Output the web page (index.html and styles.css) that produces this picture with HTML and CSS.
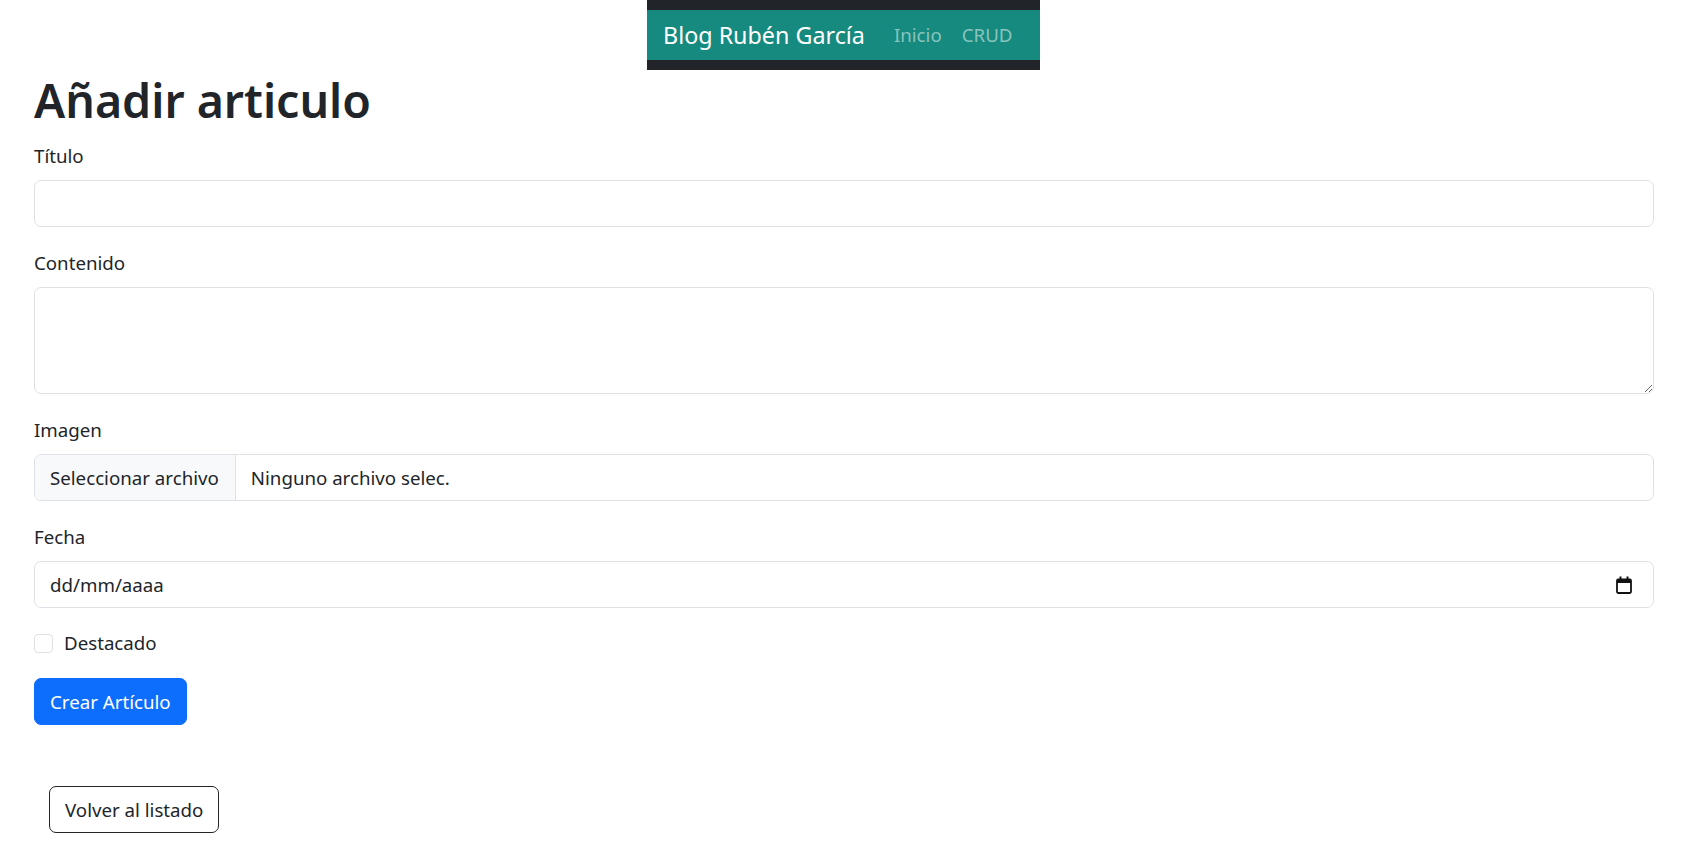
FILE: index.html
```html
<!DOCTYPE html>
<html lang="es">
<head>
<meta charset="utf-8">
<title>Añadir articulo</title>
<link rel="stylesheet" href="styles.css">
</head>
<body>
<header class="topbar">
  <nav class="navbar">
    <a class="brand" href="#">Blog Rubén García</a>
    <a class="nav-link" href="#">Inicio</a>
    <a class="nav-link" href="#">CRUD</a>
  </nav>
</header>
<main class="container">
  <h1 class="title">Añadir articulo</h1>
  <form class="form">
    <div class="field">
      <label class="label" for="titulo">Título</label>
      <input class="control" id="titulo" type="text">
    </div>
    <div class="field">
      <label class="label" for="contenido">Contenido</label>
      <textarea class="control area" id="contenido"></textarea>
    </div>
    <div class="field">
      <label class="label">Imagen</label>
      <div class="control file">
        <span class="file-btn">Seleccionar archivo</span>
        <span class="file-name">Ninguno archivo selec.</span>
      </div>
    </div>
    <div class="field">
      <label class="label">Fecha</label>
      <div class="control date">
        <span>dd/mm/aaaa</span>
        <svg class="cal" width="16" height="18" viewBox="0 0 16 18" aria-hidden="true">
          <rect x="1" y="3.5" width="14" height="13.5" rx="1.2" fill="none" stroke="#111" stroke-width="1.8"/>
          <rect x="1" y="3" width="14" height="4" fill="#111"/>
          <rect x="3.5" y="0.5" width="2" height="3.5" fill="#111"/>
          <rect x="10.5" y="0.5" width="2" height="3.5" fill="#111"/>
        </svg>
      </div>
    </div>
    <div class="check">
      <span class="box"></span>
      <span class="check-label">Destacado</span>
    </div>
    <button class="btn primary" type="button">Crear Artículo</button>
  </form>
  <div class="back">
    <a class="btn outline" href="#">Volver al listado</a>
  </div>
</main>
</body>
</html>
```
FILE: styles.css
```css
* { box-sizing: border-box; }
html, body { margin: 0; padding: 0; }
body {
  font-family: "Noto Sans", "Open Sans", sans-serif;
  font-size: 18.7px;
  line-height: 1.5;
  color: #212529;
  background: #fff;
}
.topbar {
  display: flex;
  justify-content: center;
  padding-right: 11px;
}
.navbar {
  width: 393px;
  height: 70px;
  background: #168a7f;
  border-top: 10px solid #212529;
  border-bottom: 10px solid #212529;
  display: flex;
  align-items: center;
  padding: 1px 16px 0;
  white-space: nowrap;
}
.brand {
  color: #fff;
  text-decoration: none;
  font-size: 23.3px;
  margin-right: 29px;
}
.nav-link {
  color: #8ac4be;
  text-decoration: none;
  font-size: 18.7px;
  margin-right: 20px;
}
.container {
  padding: 0 44px 0 34px;
}
.title {
  margin: 0 0 10px;
  font-size: 46.5px;
  font-weight: 600;
  line-height: 60px;
}
.field { margin-bottom: 20px; }
.label {
  display: block;
  margin-bottom: 10px;
  line-height: 30px;
  padding-top: 1px;
  height: 30px;
}
.control {
  display: block;
  width: 100%;
  height: 47px;
  border: 1px solid #dee2e6;
  border-radius: 7px;
  padding: 0 15px;
  font: inherit;
  color: #212529;
  background: #fff;
  outline: none;
}
.area {
  height: 107px;
  resize: vertical;
  padding: 7px 15px;
}
.file {
  display: flex;
  align-items: stretch;
  padding: 0;
  overflow: hidden;
}
.file-btn {
  display: flex;
  align-items: center;
  padding: 1px 16px 0 15px;
  background: #f8f9fa;
  border-right: 1px solid #dee2e6;
}
.file-name {
  display: flex;
  align-items: center;
  padding: 1px 15px 0;
}
.date {
  display: flex;
  align-items: center;
  justify-content: space-between;
  padding: 1px 21px 0 15px;
}
.check {
  display: flex;
  align-items: center;
  height: 30px;
  margin-bottom: 20px;
}
.box {
  width: 19px;
  height: 19px;
  border: 1px solid #dee2e6;
  border-radius: 4px;
  margin-right: 11px;
}
.check-label { padding-top: 1px; }
.btn {
  display: inline-flex;
  align-items: center;
  height: 47px;
  padding: 1px 15px 0;
  border-radius: 7px;
  font: inherit;
  text-decoration: none;
  cursor: pointer;
}
.primary {
  background: #0d6efd;
  border: 1px solid #0d6efd;
  color: #fff;
}
.back {
  margin-top: 61px;
  padding-left: 15px;
}
.outline {
  border: 1px solid #212529;
  color: #212529;
  background: #fff;
}
```
